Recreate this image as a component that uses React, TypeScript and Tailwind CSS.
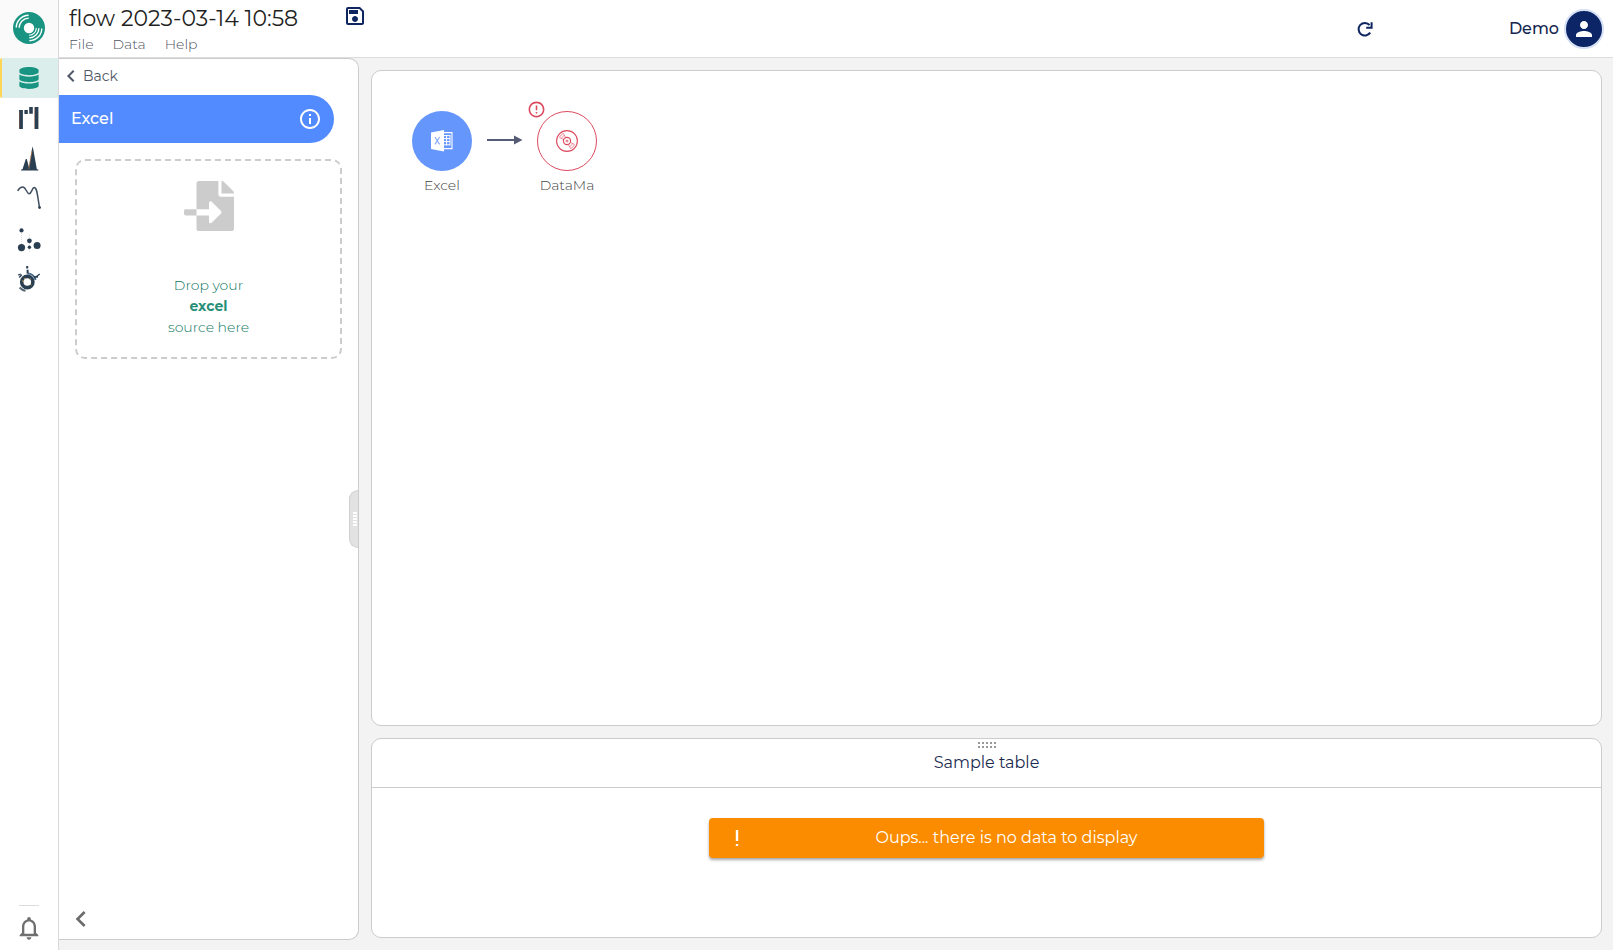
import type { ReactNode } from 'react';
import {
  MdOutlineSave,
  MdPerson,
  MdInfoOutline,
  MdChevronLeft,
  MdErrorOutline,
  MdNotificationsNone,
} from 'react-icons/md';
import { FaDatabase, FaFileImport } from 'react-icons/fa';

function Logo() {
  return (
    <svg width="32" height="32" viewBox="0 0 32 32" fill="none">
      <circle cx="16" cy="16" r="16" fill="#1a9482" />
      <circle cx="16" cy="16" r="5.2" fill="#fff" />
      <g stroke="#fff" strokeWidth="1.4">
        <path d="M3.2 15.6A12.6 12.6 0 0 1 15.6 3.2" />
        <path d="M6.1 15.8A9.8 9.8 0 0 1 15.8 6.1" />
        <path d="M28.8 16.4A12.6 12.6 0 0 1 16.4 28.8" />
        <path d="M25.9 16.2A9.8 9.8 0 0 1 16.2 25.9" />
        <path d="M23.3 16A7.3 7.3 0 0 1 16 23.3" strokeWidth="1.1" />
      </g>
    </svg>
  );
}

function WaterfallIcon() {
  return (
    <svg width="24" height="24" viewBox="0 0 24 24" fill="#2b3f52">
      <path d="M2 4H5.9V23H2zM7.4 4H10.8V8H7.4zM12.2 1H15.8V7.8H12.2zM17.6 1H21.4V23H17.6z" />
      <path d="M2 5h.6V23H2zM17.2 2h.6V23h-.6z" fill="#c9794a" opacity=".6" />
    </svg>
  );
}

function PeaksIcon() {
  return (
    <svg width="24" height="26" viewBox="0 0 24 26" fill="#2b3f52">
      <path d="M4 25.6V24.8L5.6 24L8.8 14L9.8 14L11.9 22L15 4L15.6 1.6L16.2 4L19.8 24L21.4 24.8V25.6z" />
      <path d="M11.8 24L14.8 6" stroke="#d68a4c" strokeWidth=".6" />
    </svg>
  );
}

function CurveIcon() {
  return (
    <svg width="26" height="28" viewBox="0 0 26 28" fill="none" stroke="#3f4f60" strokeWidth="1.5">
      <path d="M1.6 6.8C3.2 4.4 5.2 3 7 3.1C10 3.4 10.8 9.8 13.2 9.8C15.6 9.8 16 3.6 18.2 3.6C21.2 3.6 21.4 12 23.5 23.5" />
      <circle cx="23.6" cy="23.6" r="1.4" fill="#2b3f52" stroke="none" />
    </svg>
  );
}

function BubblesIcon() {
  return (
    <svg width="26" height="30" viewBox="0 0 26 30" fill="#2b3f52">
      <path d="M5.5 8V22M13.5 12V29" stroke="#b8c1ca" strokeWidth=".6" strokeDasharray="1 1" />
      <circle cx="5.5" cy="7.4" r="2.1" />
      <circle cx="5.5" cy="24.6" r="3.6" />
      <circle cx="13.4" cy="17.8" r="2.4" />
      <circle cx="13.4" cy="24.2" r="1.7" />
      <circle cx="21.1" cy="22.4" r="3.5" />
    </svg>
  );
}

function RadialIcon() {
  return (
    <svg width="26" height="32" viewBox="0 0 26 32" fill="none" stroke="#2b3f52">
      <circle cx="11.3" cy="20" r="5.6" strokeWidth="3.6" />
      <path d="M11.5 11.6A8.4 8.4 0 0 1 19.6 18" stroke="#4b6b8a" strokeWidth="2" />
      <path d="M11.2 4V6.4M11.6 7.8V11.5" strokeWidth="2" />
      <path d="M18.4 16L23.8 12M17.8 14.6L22 15" strokeWidth="1.3" />
      <path d="M3.2 15.5L5.8 12.8M2.2 13.2L4.8 12" strokeWidth="1.3" />
      <path d="M3.6 25.5A10 10 0 0 0 9.6 28.8" strokeWidth="2" stroke="#5a6875" />
      <path d="M6.2 19L7.8 19.3M15.4 23L14.2 22M8.2 15.8L9.3 17M14.5 16.6L13.6 17.6" stroke="#e3b75b" />
    </svg>
  );
}

function RefreshIcon() {
  return (
    <svg width="24" height="24" viewBox="0 0 24 24" fill="none" stroke="currentColor">
      <path d="M17.2 15.6A6.3 6.3 0 1 1 16.6 8" strokeWidth="2" />
      <path d="M18.6 5.2V10.7H13.2" strokeWidth="2" />
    </svg>
  );
}

function ExcelIcon() {
  return (
    <svg width="22" height="22" viewBox="0 0 22 22" fill="none">
      <path d="M12 2.6H21V18.6H12" stroke="#fff" strokeWidth="1.1" />
      <path d="M12 5.6H19M12 8.6H19M12 11.6H19M12 14.8H19M15.6 5V15.4M19 5V15.4" stroke="#fff" strokeWidth="1" />
      <path d="M0 2.4L13 0V21.5L0 19z" fill="#fff" />
      <path d="M4 7L8.6 14.4M8.6 7L4 14.4" stroke="#86a9fb" strokeWidth="1.1" />
    </svg>
  );
}

function DiscIcon() {
  return (
    <svg width="22" height="22" viewBox="0 0 22 22" fill="none" stroke="#dc4a5e">
      <circle cx="11" cy="11" r="10.4" strokeWidth="1.1" />
      <circle cx="11" cy="11" r="3.6" strokeWidth="1.2" />
      <circle cx="11" cy="11" r="1" strokeWidth=".8" />
      <g strokeWidth=".6">
        <path d="M3.4 7.4A8 8 0 0 1 7.4 3.4M5.4 8.4A6 6 0 0 1 8.4 5.4M3.4 7.4L7.2 9.4M7.4 3.4L9.4 7.2" />
        <path d="M18.6 14.6A8 8 0 0 1 14.6 18.6M16.6 13.6A6 6 0 0 1 13.6 16.6M18.6 14.6L14.8 12.6M14.6 18.6L12.6 14.8" />
      </g>
    </svg>
  );
}

function RailButton({ label, active = false, children }: { label: string; active?: boolean; children: ReactNode }) {
  return (
    <button
      aria-label={label}
      className={
        active
          ? 'flex h-10 w-full items-center justify-center rounded-l-xs border-l-2 border-[#ffd558] bg-[#dbeeeb] pr-0.5 text-[#1a9482]'
          : 'flex h-10 w-full items-center justify-center'
      }
    >
      {children}
    </button>
  );
}

function Dots({ className, count }: { className: string; count: number }) {
  return (
    <span className={className}>
      {Array.from({ length: count }, (_, i) => (
        <i key={i} className="size-0.5 bg-current" />
      ))}
    </span>
  );
}

export default function App() {
  return (
    <div className="flex h-screen bg-[#f3f3f3] font-['Montserrat','Inter',sans-serif] text-[#1f1f1f]">
      <nav className="flex w-[59px] shrink-0 flex-col border-r border-[#d9d9d9] bg-white">
        <a href="#" aria-label="Home" className="flex h-[58px] items-center justify-center bg-[#fafafa] pb-0.5">
          <Logo />
        </a>
        <RailButton label="Data sources" active>
          <FaDatabase size={22} />
        </RailButton>
        <RailButton label="Waterfall"><WaterfallIcon /></RailButton>
        <RailButton label="Distribution"><PeaksIcon /></RailButton>
        <RailButton label="Trend"><CurveIcon /></RailButton>
        <RailButton label="Clusters"><BubblesIcon /></RailButton>
        <RailButton label="Radial"><RadialIcon /></RailButton>
        <div className="mt-auto flex flex-col items-center pb-2">
          <hr className="mb-2 w-5 border-[#dcdcdc]" />
          <button aria-label="Notifications" className="text-[#6f6f6f]">
            <MdNotificationsNone size={28} />
          </button>
        </div>
      </nav>

      <div className="flex min-w-0 grow flex-col">
        <header className="flex h-[58px] shrink-0 items-center border-b border-[#dddddd] bg-white pr-[9px] pl-2.5">
          <div className="flex items-start gap-[34px] self-start pt-1">
            <div>
              <h1 className="w-60 pt-px text-[22px] leading-7 whitespace-nowrap">flow 2023-03-14 10:58</h1>
              <div className="flex gap-[19px] text-sm leading-[22px] font-light text-[#4f5561]">
                <button>File</button>
                <button>Data</button>
                <button>Help</button>
              </div>
            </div>
            <button aria-label="Save" className="text-[#0f2560]">
              <MdOutlineSave size={24} />
            </button>
          </div>
          <button aria-label="Refresh" className="mr-[132px] ml-auto text-[#0f2560]">
            <RefreshIcon />
          </button>
          <a href="#" className="flex items-center gap-[5px] font-medium text-[#14264f]">
            Demo
            <span className="flex size-10 items-center justify-center rounded-full border-2 border-[#d6e1f6] bg-[#0b2566] text-white">
              <MdPerson size={24} />
            </span>
          </a>
        </header>

        <div className="flex min-h-0 grow">
          <aside className="relative mb-2.5 flex w-[300px] shrink-0 flex-col rounded-r-[10px] border border-l-0 border-[#cccccc] bg-white">
            <button className="flex h-9 items-center pb-0.5 text-sm text-[#4f5866]">
              <MdChevronLeft size={24} />
              Back
            </button>
            <div className="mr-6 flex h-12 items-center justify-between rounded-r-full bg-[#528bff] pr-3 pl-3 font-medium text-white">
              Excel
              <button aria-label="About Excel">
                <MdInfoOutline size={24} />
              </button>
            </div>
            <button className="mx-4 mt-4 flex h-[200px] flex-col items-center rounded-[10px] border-2 border-dashed border-[#cccccc] pt-5 text-sm leading-[21px] font-light text-[#10775f]">
              <FaFileImport size={50} color="#cccccc" />
              <span className="mt-11">Drop your</span>
              <strong className="font-bold text-[#2a8f78]">excel</strong>
              <span>source here</span>
            </button>
            <button aria-label="Collapse panel" className="mt-auto mb-1 ml-1.5 self-start text-[#6b6b6b]">
              <MdChevronLeft size={32} />
            </button>
            <button
              aria-label="Resize panel"
              className="absolute top-[431px] right-0 flex h-[58px] w-[9px] items-center justify-end rounded-l-[10px] border border-r-0 border-[#d0d0d0] bg-[#e2e2e2] pr-px text-white"
            >
              <Dots count={10} className="grid grid-cols-2 gap-x-0 gap-y-px" />
            </button>
          </aside>

          <main className="flex min-w-0 grow flex-col gap-3 p-3 pr-[11px]">
            <section className="relative min-h-0 grow rounded-[10px] border border-[#cccccc] bg-white text-sm font-light text-[#444444]">
              <div className="absolute top-10 left-10 flex w-[60px] flex-col items-center gap-1">
                <span className="flex size-[60px] items-center justify-center rounded-full bg-[#6596fc]">
                  <ExcelIcon />
                </span>
                Excel
              </div>
              <svg className="absolute top-16 left-[115px]" width="37" height="10" viewBox="0 0 37 10" fill="#555b75">
                <path d="M0 4H27V.5L35.5 5L27 9.5V6H0z" />
              </svg>
              <div className="absolute top-10 left-[165px] flex w-[60px] flex-col items-center gap-1">
                <span className="flex size-[60px] items-center justify-center rounded-full border border-[#dc4a5e]">
                  <DiscIcon />
                </span>
                DataMa
              </div>
              <MdErrorOutline size={19} color="#dc4a5e" className="absolute top-[29px] left-[155px]" />
            </section>

            <section className="flex h-[200px] shrink-0 flex-col items-center rounded-[10px] border border-[#cccccc] bg-white">
              <div className="flex h-[49px] w-full flex-col items-center border-b border-[#cccccc] pt-[3px]">
                <Dots count={10} className="grid grid-cols-5 gap-0.5 text-[#999999]" />
                <h2 className="mt-[3px] leading-6 text-[#1b2b50]">Sample table</h2>
              </div>
              <div
                role="alert"
                className="mt-[30px] flex h-10 w-[555px] max-w-full items-center rounded-sm bg-[#fb8c00] text-white shadow-[0_2px_3px_rgba(0,0,0,0.35)]"
              >
                <svg className="ml-6 shrink-0" width="8" height="18" viewBox="0 0 8 18" fill="#fff">
                  <path d="M2.8 1H5.2V12H2.8zM2.8 15H5.2V17H2.8z" />
                </svg>
                <p className="grow pl-2 text-center">Oups... there is no data to display</p>
              </div>
            </section>
          </main>
        </div>
      </div>
    </div>
  );
}
